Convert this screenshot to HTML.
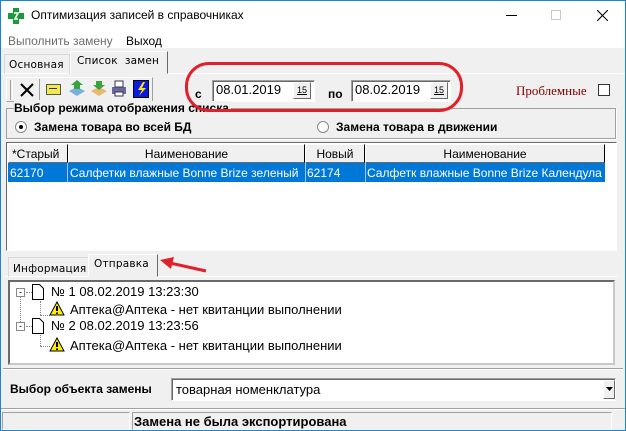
<!DOCTYPE html>
<html><head><meta charset="utf-8"><style>
*{margin:0;padding:0;box-sizing:border-box}
body{width:626px;height:431px;overflow:hidden;background:#f0f0f0;font-family:"Liberation Sans","Noto Sans CJK SC",sans-serif;font-size:12px;color:#000;position:relative}
.a{position:absolute;white-space:nowrap}
.sunk{border:1px solid;border-color:#a0a0a0 #fff #fff #a0a0a0;box-shadow:inset 1px 1px 0 #696969}
.raise{border:1px solid;border-color:#fff #696969 #696969 #fff;background:#f0f0f0}
.b{font-weight:bold}
.tab{font-family:'DejaVu Sans',sans-serif;font-size:10.5px;letter-spacing:0.2px}
</style></head><body>
<div class="a" style="left:0;top:0;width:626px;height:48px;background:#fff"></div>
<div class="a" style="left:0;top:0;width:626px;height:431px;border:1px solid #1883d7;pointer-events:none;z-index:9"></div>
<!-- title -->
<svg class="a" style="left:7px;top:7px" width="18" height="18" viewBox="0 0 18 18"><path d="M6 1h6v5h5v6h-5v5H6v-5H1V6h5z" fill="#1a9a3a"/><path d="M7 6h4l-3 6h3" stroke="#fff" stroke-width="1.6" fill="none"/></svg>
<div class="a" style="left:31px;top:8px;font-size:12px">Оптимизация записей в справочниках</div>
<div class="a" style="left:506px;top:15px;width:11px;height:1px;background:#000"></div>
<div class="a" style="left:551px;top:10px;width:10px;height:10px;border:1px solid #c8c8c8"></div>
<svg class="a" style="left:597px;top:10px" width="11" height="11"><path d="M0 0L11 11M11 0L0 11" stroke="#000" stroke-width="1.1"/></svg>
<div class="a" style="left:8px;top:34px;color:#6d6d6d">Выполнить замену</div>
<div class="a" style="left:126px;top:34px">Выход</div>
<!-- top tabs -->
<div class="a" style="left:0;top:73px;width:626px;height:1px;background:#fff"></div>
<div class="a tab" style="left:4px;top:54px;width:66px;height:20px;border:1px solid #d9d9d9;border-bottom:none;padding:4px 0 0 4px">Основная</div>
<div class="a tab" style="left:70px;top:51px;width:98px;height:23px;border:1px solid;border-color:#fff #696969 #f0f0f0 #fff;background:#f0f0f0;padding:3px 0 0 6px">Список&nbsp;&nbsp;замен</div>
<!-- toolbar -->
<div class="a" style="left:6px;top:77px;width:147px;height:25px;border:1px solid;border-color:#fff #a0a0a0 #a0a0a0 #fff"></div>
<div class="a" style="left:10px;top:80px;width:3px;height:20px;border-left:1px solid #a0a0a0;border-right:1px solid #fff"></div>
<svg class="a" style="left:20px;top:83px" width="14" height="14"><path d="M1 1L13 13M13 1L1 13" stroke="#000" stroke-width="2"/></svg>
<div class="a" style="left:39px;top:79px;width:1px;height:21px;background:#a0a0a0"></div>
<div class="a" style="left:46px;top:84px;width:15px;height:11px;background:#f2e94a;border:1px solid #555"></div>
<div class="a" style="left:49px;top:88px;width:8px;height:1px;background:#333"></div>
<svg class="a" style="left:68px;top:80px" width="18" height="18"><path d="M1 11l8-4 8 4-8 5z" fill="#7ab0e0"/><path d="M6 9V5H3l6-5 6 5h-3v4z" fill="#3aa33a"/></svg>
<svg class="a" style="left:90px;top:80px" width="18" height="18"><path d="M1 11l8-4 8 4-8 5z" fill="#e8b870"/><path d="M6 1v4H3l6 5 6-5h-3V1z" fill="#3aa33a"/></svg>
<svg class="a" style="left:111px;top:80px" width="16" height="18"><rect x="1" y="7" width="14" height="7" fill="#6a6a9a"/><rect x="4" y="1" width="8" height="6" fill="#fff" stroke="#335"/><rect x="4" y="12" width="8" height="4" fill="#fff" stroke="#335"/></svg>
<div class="a" style="left:133px;top:80px;width:16px;height:18px;background:#0a1ae0;border:1px solid #000"></div>
<svg class="a" style="left:134px;top:81px" width="15" height="16"><path d="M9 1L4 9h4l-3 6 7-8H8l3-6z" fill="#ffe000"/></svg>
<!-- red ellipse -->
<div class="a" style="left:185px;top:62px;width:278px;height:50px;border:3px solid #e0202a;border-radius:24px;z-index:5"></div>
<div class="a b" style="left:195px;top:87px">с</div>
<div class="a sunk" style="left:212px;top:80px;width:103px;height:22px;background:#fff"></div>
<div class="a" style="left:216px;top:82px;font-size:13px">08.01.2019</div>
<div class="a raise" style="left:293px;top:82px;width:18px;height:17px;font-size:9px;text-align:center;line-height:14px;text-decoration:underline">15</div>
<div class="a b" style="left:328px;top:87px">по</div>
<div class="a sunk" style="left:351px;top:80px;width:100px;height:22px;background:#fff"></div>
<div class="a" style="left:355px;top:82px;font-size:13px">08.02.2019</div>
<div class="a raise" style="left:430px;top:82px;width:18px;height:17px;font-size:9px;text-align:center;line-height:14px;text-decoration:underline">15</div>
<div class="a" style="left:516px;top:83px;color:#800000;font-family:'Liberation Serif',serif;font-size:13px">Проблемные</div>
<div class="a" style="left:598px;top:84px;width:12px;height:12px;background:#fff;border:1px solid #333"></div>
<!-- group -->
<div class="a" style="left:6px;top:108px;width:610px;height:31px;border:1px solid #a0a0a0;box-shadow:1px 1px 0 #fff"></div>
<div class="a b" style="left:14px;top:101px;background:#f0f0f0;padding-right:2px">Выбор режима отображения списка</div>
<div class="a" style="left:15px;top:121px;width:12px;height:12px;border-radius:50%;background:#fff;border:1px solid #888"></div>
<div class="a" style="left:19px;top:125px;width:4px;height:4px;border-radius:50%;background:#000"></div>
<div class="a b" style="left:34px;top:120px">Замена товара во всей БД</div>
<div class="a" style="left:317px;top:121px;width:12px;height:12px;border-radius:50%;background:#fff;border:1px solid #888"></div>
<div class="a b" style="left:336px;top:120px">Замена товара в движении</div>
<!-- grid -->
<div class="a" style="left:6px;top:142px;width:611px;height:109px;background:#fff;border:1px solid;border-color:#696969 #fff #fff #696969"></div>
<div class="a raise" style="left:8px;top:144px;width:60px;height:19px;border-right-color:#000;padding:2px 0 0 3px">*Старый</div>
<div class="a raise" style="left:68px;top:144px;width:237px;height:19px;border-right-color:#000;text-align:center;padding-top:2px">Наименование</div>
<div class="a raise" style="left:305px;top:144px;width:60px;height:19px;border-right-color:#000;text-align:center;padding-top:2px">Новый</div>
<div class="a raise" style="left:365px;top:144px;width:240px;height:19px;border-right-color:#000;text-align:center;padding-top:2px">Наименование</div>
<div class="a" style="left:8px;top:163px;width:597px;height:19px;background:#0078d7;color:#fff;overflow:hidden">
<span class="a" style="left:2px;top:3px">62170</span>
<span class="a" style="left:59px;top:0;width:1px;height:19px;background:#a0c8f0"></span>
<span class="a" style="left:62px;top:3px;width:235px;overflow:hidden">Салфетки влажные Bonne Brize зеленый</span>
<span class="a" style="left:297px;top:0;width:1px;height:19px;background:#a0c8f0"></span>
<span class="a" style="left:299px;top:3px">62174</span>
<span class="a" style="left:357px;top:0;width:1px;height:19px;background:#a0c8f0"></span>
<span class="a" style="left:359px;top:3px;width:238px;overflow:hidden">Салфетк влажные Bonne Brize Календула</span>
</div>
<!-- bottom tabs -->
<div class="a" style="left:6px;top:276px;width:611px;height:1px;background:#fff"></div>
<div class="a tab" style="left:8px;top:257px;width:81px;height:20px;border:1px solid #d9d9d9;border-bottom:none;padding:5px 0 0 4px">Информация</div>
<div class="a tab" style="left:88px;top:254px;width:70px;height:23px;border:1px solid;border-color:#fff #696969 #f0f0f0 #fff;background:#f0f0f0;padding:3px 0 0 5px">Отправка</div>
<svg class="a" style="left:150px;top:254px;z-index:6" width="60" height="22"><path d="M56 17L20 9" stroke="#e0202a" stroke-width="3"/><path d="M10 6L24 3L21 15z" fill="#e0202a"/></svg>
<!-- tree -->
<div class="a" style="left:8px;top:280px;width:607px;height:85px;background:#fff;border:2px solid;border-color:#696969 #c8c8c8 #c8c8c8 #696969"></div>
<div class="a" style="left:20px;top:296px;width:1px;height:30px;border-left:1px dotted #888"></div>
<div class="a" style="left:40px;top:301px;width:1px;height:14px;border-left:1px dotted #888"></div>
<div class="a" style="left:40px;top:315px;width:10px;height:1px;border-top:1px dotted #888"></div>
<div class="a" style="left:40px;top:332px;width:1px;height:14px;border-left:1px dotted #888"></div>
<div class="a" style="left:40px;top:346px;width:10px;height:1px;border-top:1px dotted #888"></div>
<div class="a" style="left:16px;top:288px;width:9px;height:9px;border:1px solid #888;background:#fff;font-size:9px;line-height:6px;text-align:center">-</div>
<div class="a" style="left:26px;top:292px;width:6px;height:1px;border-top:1px dotted #888"></div>
<svg class="a" style="left:32px;top:284px" width="12" height="16"><path d="M.5.5h7l4 4v11h-11z" fill="#fff" stroke="#000"/></svg>
<div class="a" style="left:51px;top:284px;font-size:13px">№ 1 08.02.2019 13:23:30</div>
<svg class="a" style="left:49px;top:301px" width="16" height="15"><path d="M8 1L15 14H1z" fill="#ffee00" stroke="#000"/><path d="M8 5v5M8 11.5v1.5" stroke="#000" stroke-width="2"/></svg>
<div class="a" style="left:70px;top:302px;font-size:13px">Аптека@Аптека - нет квитанции выполнении</div>
<div class="a" style="left:16px;top:322px;width:9px;height:9px;border:1px solid #888;background:#fff;font-size:9px;line-height:6px;text-align:center">-</div>
<div class="a" style="left:26px;top:326px;width:6px;height:1px;border-top:1px dotted #888"></div>
<svg class="a" style="left:32px;top:318px" width="12" height="16"><path d="M.5.5h7l4 4v11h-11z" fill="#fff" stroke="#000"/></svg>
<div class="a" style="left:51px;top:318px;font-size:13px">№ 2 08.02.2019 13:23:56</div>
<svg class="a" style="left:49px;top:337px" width="16" height="15"><path d="M8 1L15 14H1z" fill="#ffee00" stroke="#000"/><path d="M8 5v5M8 11.5v1.5" stroke="#000" stroke-width="2"/></svg>
<div class="a" style="left:70px;top:338px;font-size:13px">Аптека@Аптека - нет квитанции выполнении</div>
<div class="a" style="left:3px;top:368px;width:620px;height:2px;border-top:1px solid #a0a0a0;border-bottom:1px solid #fff"></div>
<!-- combo -->
<div class="a b" style="left:10px;top:382px">Выбор объекта замены</div>
<div class="a sunk" style="left:171px;top:378px;width:445px;height:23px;background:#fff"></div>
<div class="a" style="left:176px;top:382px;font-size:13px">товарная номенклатура</div>
<div class="a raise" style="left:603px;top:380px;width:12px;height:19px"></div>
<svg class="a" style="left:606px;top:387px" width="7" height="4"><path d="M0 0h7L3.5 4z"/></svg>
<!-- status -->
<div class="a" style="left:0;top:408px;width:626px;height:2px;border-top:1px solid #a0a0a0;border-bottom:1px solid #fff"></div>
<div class="a" style="left:2px;top:412px;width:128px;height:18px;border:1px solid;border-color:#a0a0a0 #fff #fff #a0a0a0"></div>
<div class="a" style="left:132px;top:412px;width:480px;height:18px;border:1px solid;border-color:#a0a0a0 #fff #fff #a0a0a0"></div>
<div class="a b" style="left:134px;top:414px;font-size:13px">Замена не была экспортирована</div>
</body></html>
